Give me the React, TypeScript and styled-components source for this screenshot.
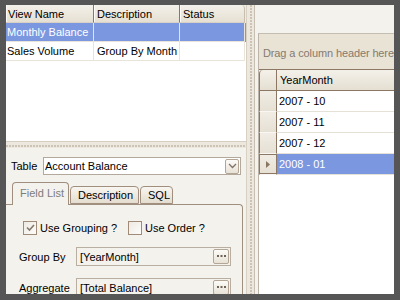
import styled, { createGlobalStyle } from "styled-components";

const GlobalStyle = createGlobalStyle`
  html, body {
    margin: 0;
    padding: 0;
    background: #565656;
  }
  body {
    font-family: "Liberation Sans", Tahoma, Arial, sans-serif;
    font-size: 11px;
    color: #000;
  }
  * {
    box-sizing: border-box;
  }
`;

const Frame = styled.div`
  width: 400px;
  height: 300px;
  padding: 5px 6px 6px 6px;
  background: #565656;
  display: flex;
  overflow: hidden;
`;

const LeftPane = styled.div`
  width: 240px;
  display: flex;
  flex-direction: column;
`;

const ViewGrid = styled.div`
  height: 136px;
  background: #fff;
  display: flex;
  flex-direction: column;
`;

const ViewRow = styled.div<{ $selected?: boolean }>`
  display: grid;
  grid-template-columns: 88px 86px 65px 1px;
  height: 19px;
  background: ${(p) => (p.$selected ? "#7b97df" : "#fff")};
  color: ${(p) => (p.$selected ? "#fff" : "#000")};
`;

const HeadRow = styled.div`
  display: grid;
  grid-template-columns: 88px 86px 65px 1px;
  height: 18px;
  background: #f0ebe1;
`;

const HeadCell = styled.div<{ $last?: boolean }>`
  display: flex;
  align-items: center;
  padding: 0 3px;
  background: linear-gradient(#f4f1ea, #e6e0d3);
  border-right: 1px solid ${(p) => (p.$last ? "#c9bdae" : "#8c7664")};
  box-shadow: inset 1px 0 #fbfaf6;
  border-bottom: 1px solid #d9d2c4;
  border-top-right-radius: ${(p) => (p.$last ? "4px" : "0")};
  &:first-child {
    padding-left: 2px;
  }
`;

const Cell = styled.div`
  display: flex;
  align-items: center;
  padding: 0 3px;
  border-right: 1px solid #e8e4da;
  border-bottom: 1px solid #e8e4da;
  white-space: nowrap;
  overflow: hidden;
  &:first-child {
    padding-left: 1px;
  }
`;

const HSplitter = styled.div`
  height: 7px;
  background: #ece8df;
  border-top: 1px solid #d6cec1;
  display: flex;
  align-items: center;
  &::after {
    content: "";
    flex: 1;
    height: 2px;
    margin-top: 1px;
    background: repeating-linear-gradient(
      90deg,
      #cdc3b5 0 2px,
      transparent 2px 3px
    );
  }
`;

const Editor = styled.div`
  flex: 1;
  background: #f4f2ed;
  display: flex;
  flex-direction: column;
  padding-top: 9px;
  overflow: hidden;
`;

const TableRow = styled.div`
  display: flex;
  align-items: center;
  padding-left: 5px;
  height: 18px;
`;

const TableLabel = styled.span`
  width: 32px;
`;

const Combo = styled.div`
  width: 198px;
  height: 18px;
  background: #fff;
  border: 1px solid #b2a89c;
  display: flex;
  align-items: center;
  justify-content: space-between;
  padding: 0 0 0 1px;
`;

const SmallButton = styled.div<{ $w: number; $h: number }>`
  width: ${(p) => p.$w}px;
  height: ${(p) => p.$h}px;
  margin-right: 1px;
  border: 1px solid #b4a595;
  border-radius: 2px;
  background: linear-gradient(#fcfbf8, #e8e2d6);
  display: flex;
  align-items: center;
  justify-content: center;
`;

const TabStrip = styled.div`
  display: flex;
  align-items: flex-end;
  gap: 1px;
  margin-top: 7px;
  padding-left: 6px;
  height: 22px;
`;

const Tab = styled.div<{ $active?: boolean; $w: number }>`
  position: relative;
  z-index: ${(p) => (p.$active ? 1 : 0)};
  width: ${(p) => p.$w}px;
  height: ${(p) => (p.$active ? 23 : 18)}px;
  margin-bottom: ${(p) => (p.$active ? -1 : 0)}px;
  padding-top: ${(p) => (p.$active ? 4 : 2)}px;
  padding-left: 7px;
  border: 1px solid #a08f7e;
  border-bottom: ${(p) => (p.$active ? "none" : "1px solid #a08f7e")};
  border-radius: 4px 4px 0 0;
  background: ${(p) =>
    p.$active ? "#f4f2ed" : "linear-gradient(#f8f6f1, #e4ddcf)"};
  color: ${(p) => (p.$active ? "#7d7d7d" : "#000")};
`;

const TabPanel = styled.div`
  flex: 1;
  margin-right: 3px;
  border: 1px solid #a08f7e;
  border-left: none;
  border-bottom: none;
  border-top-right-radius: 4px;
  padding: 15px 0 0 13px;
  display: flex;
  flex-direction: column;
`;

const CheckRow = styled.div`
  display: flex;
  align-items: center;
  padding-left: 4px;
  height: 15px;
`;

const CheckItem = styled.label`
  display: flex;
  align-items: center;
  gap: 3px;
  width: 105px;
`;

const Box = styled.span`
  width: 14px;
  height: 14px;
  border: 1px solid #a08a78;
  background: linear-gradient(135deg, #eeeae2, #fdfcfa);
  display: flex;
  align-items: center;
  justify-content: center;
`;

const FieldRow = styled.div`
  display: flex;
  align-items: center;
  height: 19px;
  margin-top: 12px;
`;

const FieldLabel = styled.span`
  width: 57px;
`;

const FieldInput = styled.div`
  width: 155px;
  height: 19px;
  border: 1px solid #b8aea2;
  background: #f4f2ed;
  display: flex;
  align-items: center;
  justify-content: space-between;
  padding-left: 3px;
`;

const VSplitter = styled.div`
  width: 9px;
  background: #ece8df;
  border-left: 1px solid #d8d0c3;
  border-right: 1px solid #c6beb1;
  display: flex;
  justify-content: center;
  &::after {
    content: "";
    width: 2px;
    margin-left: 1px;
    background: repeating-linear-gradient(
      180deg,
      #cdc3b5 0 2px,
      transparent 2px 3px
    );
  }
`;

const RightPane = styled.div`
  flex: 1;
  background: #f4f2ed;
  padding: 28px 0 0 3px;
  display: flex;
  overflow: hidden;
`;

const DataGrid = styled.div`
  flex: 1;
  background: #fff;
  border-top: 1px solid #c3bdb2;
  border-left: 1px solid #bdb3a6;
  display: flex;
  flex-direction: column;
  overflow: hidden;
`;

const GroupPanel = styled.div`
  height: 35px;
  background: #e9e3d6;
  color: #857a6e;
  display: flex;
  align-items: center;
  padding: 3px 0 0 4px;
  letter-spacing: -0.12px;
  white-space: nowrap;
  overflow: hidden;
`;

const GridHead = styled.div`
  display: flex;
  height: 22px;
  border-top: 1px solid #8c7664;
  border-bottom: 1px solid #8c7664;
  background: linear-gradient(#f4f1ea, #e5dfd2);
`;

const Indicator = styled.div<{ $head?: boolean; $current?: boolean }>`
  width: 18px;
  flex: none;
  border-left: 1px solid #8c7664;
  border-right: 1px solid #8c7664;
  border-top-left-radius: ${(p) => (p.$head ? "4px" : "0")};
  background: ${(p) =>
    p.$head ? "transparent" : "linear-gradient(#f1ede5, #e6e0d4)"};
  box-shadow: ${(p) =>
    p.$current ? "inset 0 1px #8c7664, inset 0 -1px #8c7664" : "none"};
  border-bottom: ${(p) => (p.$head ? "none" : "1px solid #f9f7f3")};
  display: flex;
  align-items: center;
  justify-content: center;
`;

const HeadText = styled.div`
  display: flex;
  align-items: center;
  padding-left: 3px;
  white-space: nowrap;
`;

const DataRow = styled.div<{ $selected?: boolean }>`
  display: flex;
  height: 21px;
  color: ${(p) => (p.$selected ? "#fff" : "#000")};
`;

const DataCell = styled.div<{ $selected?: boolean }>`
  flex: 1;
  display: flex;
  align-items: center;
  padding-left: 2px;
  background: ${(p) => (p.$selected ? "#7b97df" : "#fff")};
  border-bottom: 1px solid #e6e1d6;
  white-space: nowrap;
`;

const views = [
  { name: "Monthly Balance", desc: "", status: "" },
  { name: "Sales Volume", desc: "Group By Month", status: "" },
];

const months = ["2007 - 10", "2007 - 11", "2007 - 12", "2008 - 01"];

function Chevron() {
  return (
    <svg width="9" height="6" viewBox="0 0 9 6">
      <path d="M1 1 L4.5 4.5 L8 1" fill="none" stroke="#7f7367" strokeWidth="1.3" />
    </svg>
  );
}

function Dots() {
  return (
    <svg width="9" height="3" viewBox="0 0 9 3">
      <rect x="0" y="0" width="2" height="2" fill="#6e6358" />
      <rect x="3.5" y="0" width="2" height="2" fill="#6e6358" />
      <rect x="7" y="0" width="2" height="2" fill="#6e6358" />
    </svg>
  );
}

function Check() {
  return (
    <svg width="9" height="8" viewBox="0 0 9 8">
      <path d="M1 3.5 L3.5 6 L8 1" fill="none" stroke="#84786c" strokeWidth="1.6" />
    </svg>
  );
}

export default function App() {
  return (
    <>
      <GlobalStyle />
      <Frame>
        <LeftPane>
          <ViewGrid>
            <HeadRow>
              <HeadCell>View Name</HeadCell>
              <HeadCell>Description</HeadCell>
              <HeadCell $last>Status</HeadCell>
            </HeadRow>
            {views.map((v, i) => (
              <ViewRow key={v.name} $selected={i === 0}>
                <Cell>{v.name}</Cell>
                <Cell>{v.desc}</Cell>
                <Cell>{v.status}</Cell>
              </ViewRow>
            ))}
          </ViewGrid>
          <HSplitter />
          <Editor>
            <TableRow>
              <TableLabel>Table</TableLabel>
              <Combo>
                <span>Account Balance</span>
                <SmallButton $w={14} $h={15}>
                  <Chevron />
                </SmallButton>
              </Combo>
            </TableRow>
            <TabStrip>
              <Tab $active $w={57}>
                Field List
              </Tab>
              <Tab $w={69}>Description</Tab>
              <Tab $w={33}>SQL</Tab>
            </TabStrip>
            <TabPanel>
              <CheckRow>
                <CheckItem>
                  <Box>
                    <Check />
                  </Box>
                  Use Grouping ?
                </CheckItem>
                <CheckItem>
                  <Box />
                  Use Order ?
                </CheckItem>
              </CheckRow>
              <FieldRow>
                <FieldLabel>Group By</FieldLabel>
                <FieldInput>
                  <span>[YearMonth]</span>
                  <SmallButton $w={16} $h={15}>
                    <Dots />
                  </SmallButton>
                </FieldInput>
              </FieldRow>
              <FieldRow>
                <FieldLabel>Aggregate</FieldLabel>
                <FieldInput>
                  <span>[Total Balance]</span>
                  <SmallButton $w={16} $h={15}>
                    <Dots />
                  </SmallButton>
                </FieldInput>
              </FieldRow>
            </TabPanel>
          </Editor>
        </LeftPane>
        <VSplitter />
        <RightPane>
          <DataGrid>
            <GroupPanel>Drag a column header here</GroupPanel>
            <GridHead>
              <Indicator $head />
              <HeadText>YearMonth</HeadText>
            </GridHead>
            {months.map((m, i) => {
              const current = i === months.length - 1;
              return (
                <DataRow key={m} $selected={current}>
                  <Indicator $current={current}>
                    {current && (
                      <svg width="4" height="7" viewBox="0 0 4 7">
                        <path d="M0 0 L4 3.5 L0 7 Z" fill="#8a7462" />
                      </svg>
                    )}
                  </Indicator>
                  <DataCell $selected={current}>{m}</DataCell>
                </DataRow>
              );
            })}
          </DataGrid>
        </RightPane>
      </Frame>
    </>
  );
}
